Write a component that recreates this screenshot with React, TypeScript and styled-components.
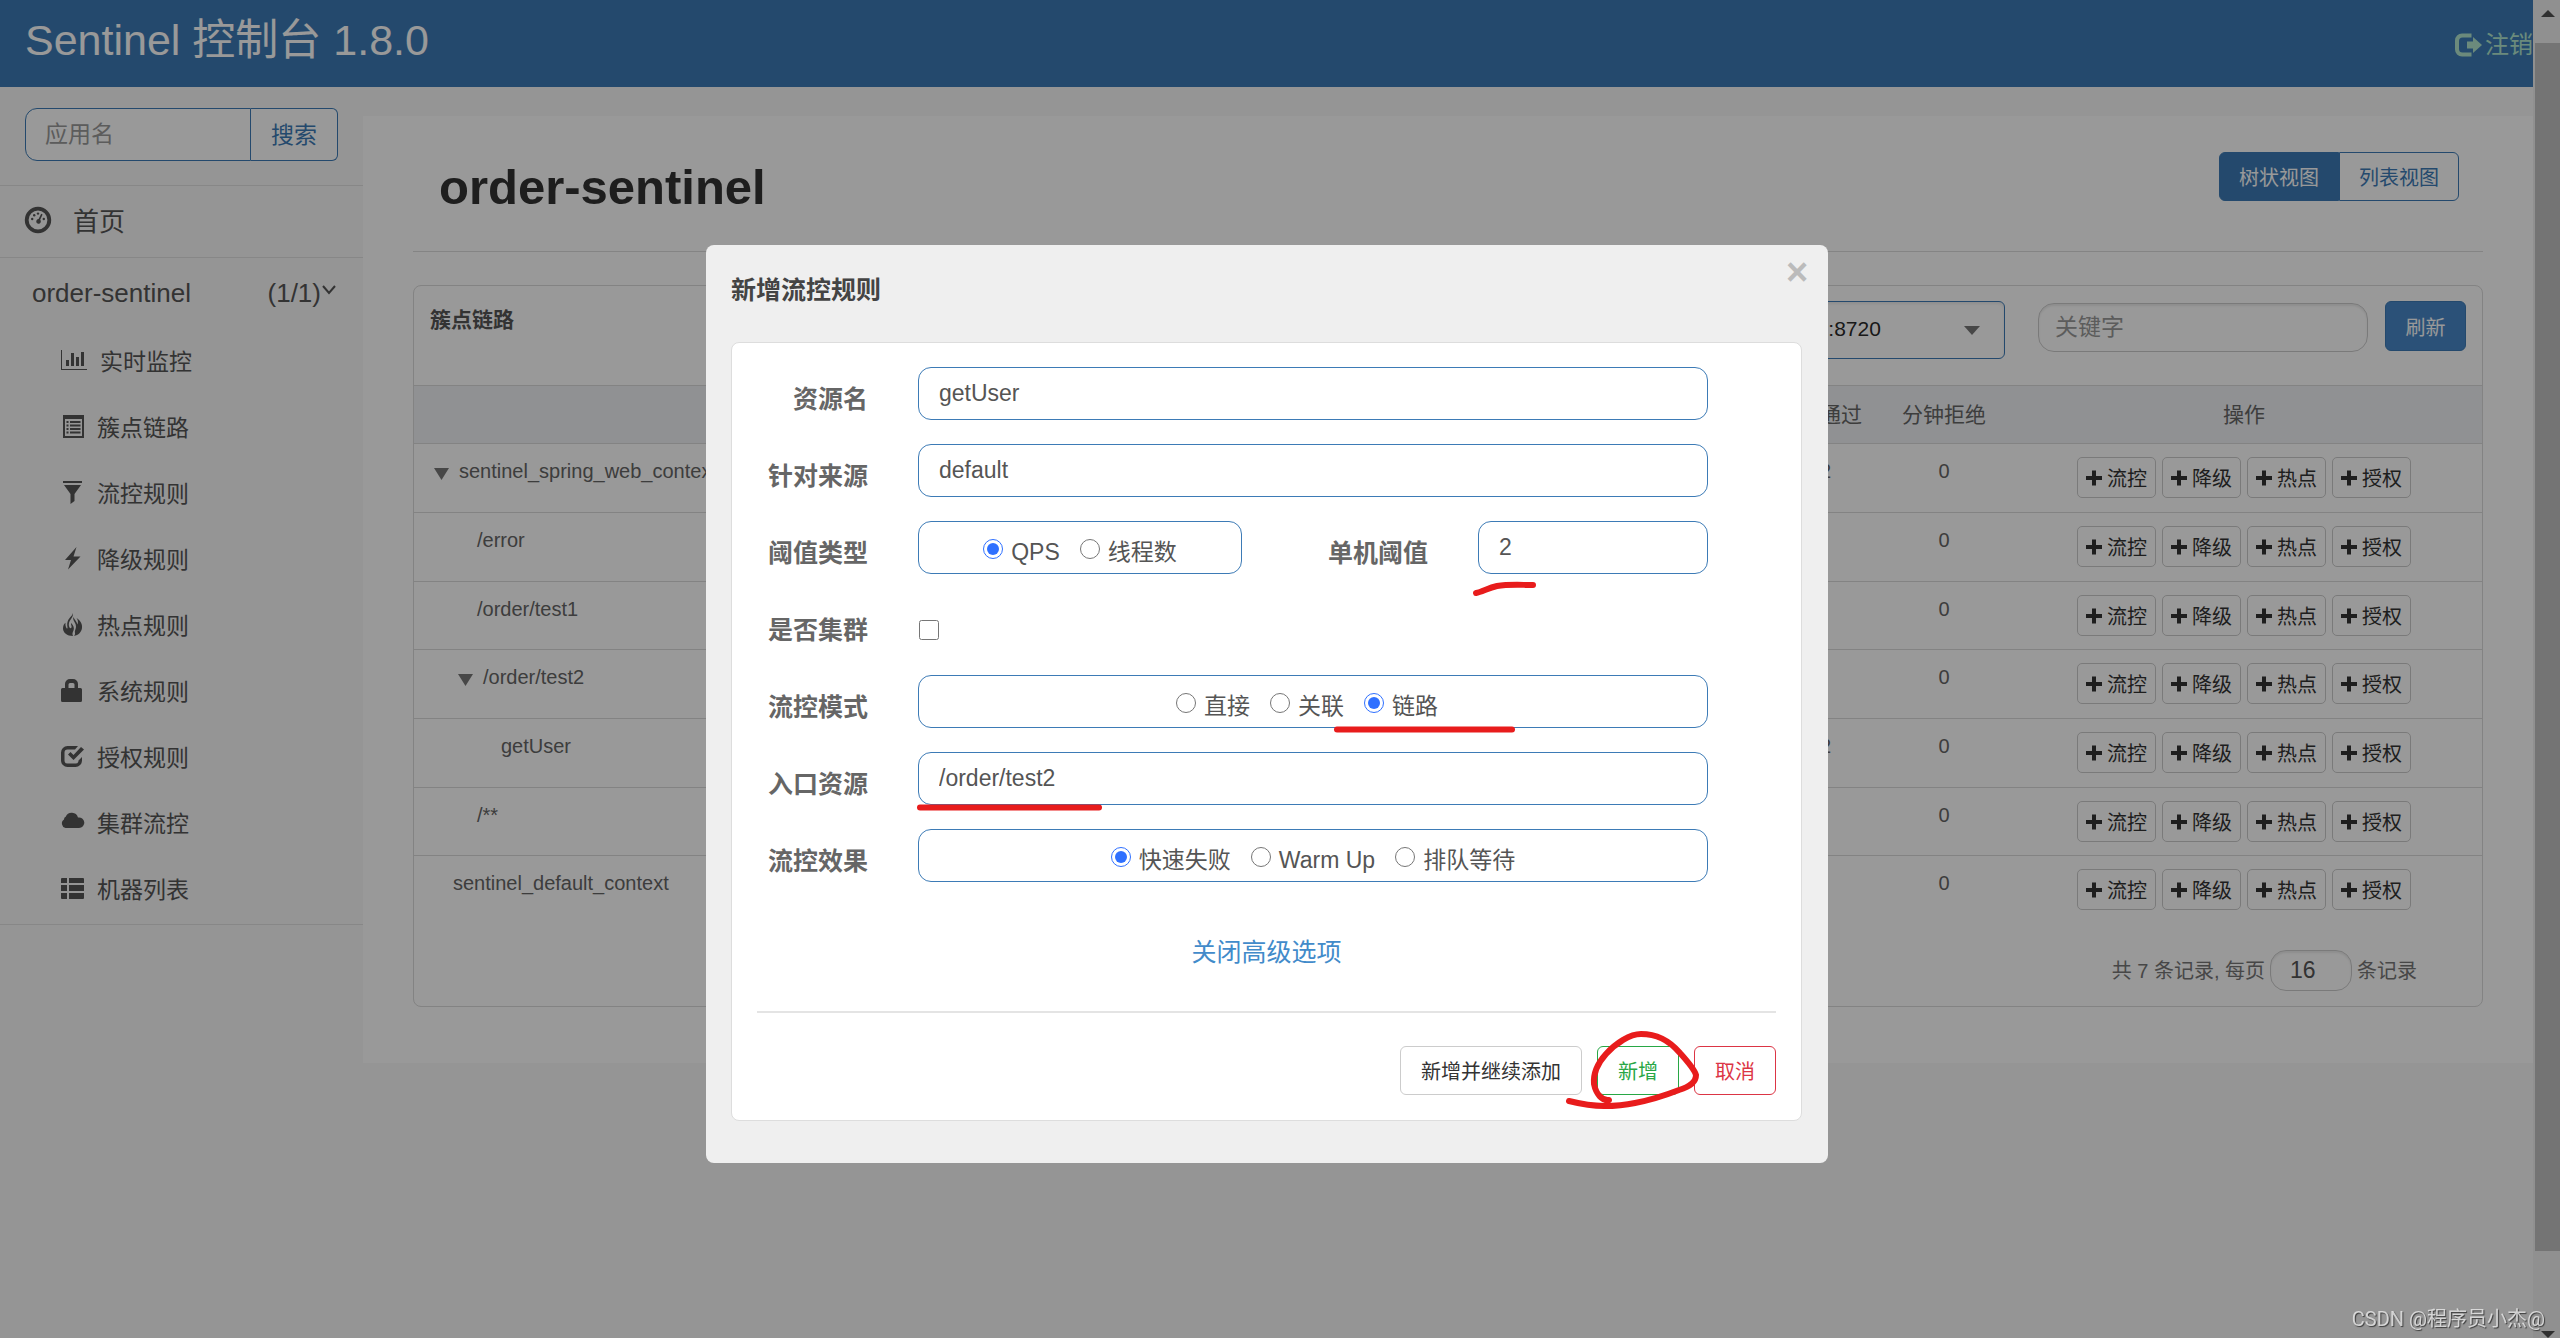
import React from "react";
import styled, { createGlobalStyle, css } from "styled-components";

const GlobalStyle = createGlobalStyle`
  *, *::before, *::after { box-sizing: border-box; }
  html, body { margin: 0; padding: 0; }
  body, button, input, select {
    font-family: "Liberation Sans", "Noto Sans CJK SC", sans-serif;
  }
  body { background: #f8f8f8; color: #555; overflow: hidden; }
  h1, h2, ul { margin: 0; padding: 0; }
  ul { list-style: none; }
  a { color: inherit; text-decoration: none; }
`;

const BLUE = "#3d7bb6";

/* ---------- frame ---------- */

const Frame = styled.div`
  display: flex;
  height: 100vh;
  overflow: hidden;
`;

const Page = styled.div`
  flex: 1;
  min-width: 0;
  display: flex;
  flex-direction: column;
`;

const Body = styled.div`
  flex: 1;
  display: flex;
  align-items: flex-start;
`;

const ScrollTrack = styled.div`
  width: 27px;
  display: flex;
  flex-direction: column;
  padding-left: 2px;
  background: #f1f1f1;
`;

const ScrollCap = styled.div<{ $size: number; $end?: boolean }>`
  height: ${(p) => p.$size}px;
  display: flex;
  justify-content: center;
  align-items: ${(p) => (p.$end ? "flex-end" : "flex-start")};
  padding-top: ${(p) => (p.$end ? 0 : 10)}px;
`;

const ScrollThumb = styled.div`
  flex: 1;
  background: #c1c1c1;
`;

/* ---------- top bar ---------- */

const TopBar = styled.header`
  height: 87px;
  flex: none;
  display: flex;
  justify-content: space-between;
  padding-left: 25px;
  background: ${BLUE};
`;

const Brand = styled.a`
  color: #fff;
  font-size: 43px;
  line-height: 80px;
  white-space: nowrap;
`;

const Logout = styled.a`
  display: flex;
  align-items: center;
  gap: 3px;
  padding-top: 2px;
  color: #b2e7cf;
  font-size: 24px;
  line-height: 30px;
  white-space: nowrap;
`;

/* ---------- sidebar ---------- */

const Sidebar = styled.nav`
  width: 363px;
  flex: none;
  padding-bottom: 2px;
  border-bottom: 1px solid #e2e2e2;
`;

const SearchGroup = styled.form`
  display: flex;
  padding: 21px 25px 24px;
  border-bottom: 1px solid #e2e2e2;
`;

const SearchInput = styled.input`
  flex: 1;
  min-width: 0;
  height: 53px;
  padding: 0 19px;
  border: 1px solid ${BLUE};
  border-radius: 12px 0 0 12px;
  background: #fff;
  font-size: 23px;
  &::placeholder { color: #999; }
`;

const SearchButton = styled.button`
  width: 87px;
  height: 53px;
  padding: 0 0 3px;
  border: 1px solid ${BLUE};
  border-left: 0;
  border-radius: 0 6px 6px 0;
  background: #fff;
  color: ${BLUE};
  font-size: 23px;
`;

const HomeLink = styled.a`
  display: flex;
  align-items: center;
  gap: 21px;
  height: 72px;
  padding: 0 0 4px 24px;
  border-bottom: 1px solid #e2e2e2;
  color: #555;
  font-size: 26px;
`;

const AppLink = styled.a`
  display: flex;
  align-items: center;
  height: 70px;
  padding: 0 26px 0 32px;
  color: #555;
  font-size: 26px;
`;

const AppName = styled.span`
  flex: 1;
`;

const MenuLink = styled.a<{ $wide?: boolean }>`
  display: flex;
  align-items: center;
  height: 66px;
  padding: 0 0 2px 61px;
  gap: ${(p) => (p.$wide ? 12 : 9)}px;
  color: #555;
  font-size: 23px;
`;

/* ---------- main ---------- */

const Main = styled.main`
  flex: 1;
  min-width: 0;
  margin-top: 29px;
  padding: 0 50px 56px;
  background: #fff;
`;

const TitleRow = styled.div`
  display: flex;
  justify-content: space-between;
  align-items: flex-start;
  height: 136px;
  padding: 36px 24px 0 26px;
  border-bottom: 1px solid #dcdcdc;
`;

const Title = styled.h1`
  padding-top: 8px;
  color: #333;
  font-size: 49px;
  line-height: 54px;
`;

const ViewSwitch = styled.div`
  display: flex;
`;

const ViewButton = styled.button<{ $active?: boolean }>`
  width: 120px;
  height: 49px;
  padding: 0;
  border: 1px solid ${BLUE};
  border-radius: ${(p) => (p.$active ? "6px 0 0 6px" : "0 6px 6px 0")};
  background: ${(p) => (p.$active ? BLUE : "#fff")};
  color: ${(p) => (p.$active ? "#fff" : BLUE)};
  font-size: 20px;
`;

const Card = styled.section`
  margin-top: 33px;
  border: 1px solid #dadada;
  border-radius: 8px;
`;

const CardHead = styled.div`
  display: flex;
  align-items: flex-start;
  height: 99px;
  padding: 15px 16px 0;
`;

const CardTitle = styled.h2`
  flex: 1;
  padding-top: 4px;
  font-size: 21px;
  line-height: 30px;
`;

const MachineSelect = styled.span`
  display: flex;
  align-items: center;
  width: 326px;
  height: 58px;
  padding-right: 24px;
  border: 1px solid ${BLUE};
  border-radius: 6px;
  box-shadow: inset 0 2px 3px rgba(0, 0, 0, 0.08);
  select {
    flex: 1;
    height: 100%;
    padding: 0 14px 3px;
    border: 0;
    background: transparent;
    color: #2b2b2b;
    font-size: 21px;
    appearance: none;
  }
`;

const KeywordInput = styled.input`
  width: 330px;
  height: 49px;
  margin: 2px 17px 0 33px;
  padding: 0 16px;
  border: 1px solid #ccc;
  border-radius: 16px;
  box-shadow: inset 0 2px 2px rgba(0, 0, 0, 0.08);
  font-size: 23px;
  &::placeholder { color: #999; }
`;

const RefreshButton = styled.button`
  width: 81px;
  height: 50px;
  padding: 0;
  border: 1px solid ${BLUE};
  border-radius: 6px;
  background: #4887c8;
  color: #fff;
  font-size: 20px;
`;

const Table = styled.table`
  width: 100%;
  border-collapse: separate;
  border-spacing: 0;
  table-layout: fixed;
  color: #666;
`;

const HeadCell = styled.th`
  height: 58px;
  padding: 0 0 4px;
  border-top: 1px solid #dadada;
  background: #f0f2f5;
  font-size: 21px;
  font-weight: 400;
`;

const Cell = styled.td<{ $center?: boolean }>`
  height: 68px;
  padding: 13px 0 0;
  border-top: 1px solid #dadada;
  font-size: 20px;
  line-height: 28px;
  vertical-align: top;
  text-align: ${(p) => (p.$center ? "center" : "left")};
`;

const Row = styled.tr`
  height: 69px;
  &:nth-child(3n) {
    height: 68px;
  }
`;

const TreeName = styled.span<{ $level: number; $open?: boolean }>`
  display: flex;
  align-items: center;
  gap: 10px;
  padding-left: ${(p) => (p.$open ? 20 : 39) + p.$level * 24}px;
  svg {
    margin-top: 5px;
  }
`;

const Actions = styled.div`
  display: flex;
  justify-content: center;
  gap: 6px;
`;

const ActionButton = styled.button`
  display: flex;
  align-items: center;
  justify-content: center;
  gap: 5px;
  width: 79px;
  height: 41px;
  padding: 0;
  border: 1px solid #ccc;
  border-radius: 5px;
  background: #fff;
  color: #333;
  font-size: 20px;
`;

const Pager = styled.div`
  display: flex;
  justify-content: flex-end;
  align-items: center;
  gap: 5px;
  padding: 26px 65px 15px 0;
  color: #777;
  font-size: 20px;
  line-height: 30px;
`;

const PageSize = styled.input`
  width: 82px;
  height: 41px;
  padding: 0 19px;
  border: 1px solid #ccc;
  border-radius: 16px;
  box-shadow: inset 0 2px 2px rgba(0, 0, 0, 0.08);
  color: #555;
  font-size: 23px;
`;

/* ---------- dialog ---------- */

const Overlay = styled.div`
  position: fixed;
  inset: 0;
  display: flex;
  justify-content: center;
  align-items: flex-start;
  padding: 245px 26px 0 0;
  background: rgba(0, 0, 0, 0.4);
`;

const Dialog = styled.div`
  position: relative;
  width: 1122px;
  padding: 0 26px 42px 25px;
  border-radius: 8px;
  background: #efefef;
`;

const DialogHead = styled.div`
  display: flex;
  justify-content: space-between;
  align-items: flex-start;
  height: 97px;
`;

const DialogTitle = styled.h2`
  padding-top: 25px;
  color: #444;
  font-size: 25px;
  line-height: 40px;
`;

const CloseButton = styled.button`
  width: 30px;
  height: 30px;
  margin: 12px -10px 0 0;
  padding: 0;
  border: 0;
  background: none;
  color: #bbb;
  font-size: 38px;
  font-weight: 700;
  line-height: 30px;
`;

const Panel = styled.form`
  padding: 24px 25px 25px;
  border: 1px solid #ddd;
  border-radius: 8px;
  background: #fff;
`;

const Fields = styled.div`
  display: flex;
  flex-direction: column;
  gap: 24px;
  padding-right: 68px;
`;

const FieldRow = styled.div`
  display: flex;
  height: 53px;
  border: 0;
`;

const labelText = css`
  margin-right: 50px;
  padding-top: 12px;
  color: #666;
  font-size: 25px;
  font-weight: 700;
  line-height: 40px;
  text-align: right;
`;

const Label = styled.label`
  width: 111px;
  ${labelText}
`;

const SideLabel = styled.label`
  flex: 1;
  ${labelText}
`;

const box = css`
  height: 53px;
  border: 1px solid ${BLUE};
  border-radius: 13px;
  background: #fff;
  color: #555;
  font-size: 23px;
`;

const TextField = styled.input<{ $short?: boolean }>`
  ${box}
  flex: ${(p) => (p.$short ? "none" : "1")};
  width: ${(p) => (p.$short ? "230px" : "auto")};
  min-width: 0;
  padding: 0 20px;
`;

const RadioBox = styled.div<{ $short?: boolean; $trail?: boolean }>`
  ${box}
  flex: ${(p) => (p.$short ? "none" : "1")};
  width: ${(p) => (p.$short ? "324px" : "auto")};
  display: flex;
  justify-content: center;
  gap: 20px;
  padding-right: ${(p) => (p.$trail ? 12 : 0)}px;
`;

const RadioOption = styled.label`
  display: flex;
  align-items: flex-start;
  gap: 8px;
  padding-top: 15px;
  line-height: 30px;
  input {
    width: 20px;
    height: 20px;
    margin: 2px 0 0;
    accent-color: #2f70ff;
  }
`;

const Check = styled.input`
  width: 20px;
  height: 20px;
  margin: 22px 0 0 1px;
`;

const AdvancedLink = styled.a`
  display: block;
  width: max-content;
  margin: 48px auto 37px;
  color: #428bca;
  font-size: 25px;
  line-height: 44px;
`;

const Buttons = styled.div`
  display: flex;
  justify-content: flex-end;
  gap: 15px;
  padding-top: 33px;
  border-top: 2px solid #e4e4e4;
`;

const FormButton = styled.button<{ $line: string; $ink: string }>`
  height: 49px;
  padding: 0 20px;
  border: 1px solid ${(p) => p.$line};
  border-radius: 6px;
  background: #fff;
  color: ${(p) => p.$ink};
  font-size: 20px;
`;

const PenMarks = styled.svg`
  position: absolute;
  inset: 0;
  width: 100%;
  height: 100%;
  pointer-events: none;
`;

const Watermark = styled.div`
  position: fixed;
  right: 15px;
  bottom: 4px;
  color: rgba(230, 230, 230, 0.85);
  font-family: Roboto, "Noto Sans CJK SC", sans-serif;
  font-size: 20px;
  line-height: 30px;
  text-shadow: 1px 1px 1px rgba(0, 0, 0, 0.6);
`;

/* ---------- icons ---------- */

const Triangle = ({ w, h, up, color }: { w: number; h: number; up?: boolean; color: string }) => (
  <svg width={w} height={h} viewBox="0 0 10 10" preserveAspectRatio="none" fill={color} aria-hidden="true">
    <path d={up ? "M5 0 10 10H0z" : "M0 0H10L5 10z"} />
  </svg>
);

const PlusIcon = () => (
  <svg width="16" height="16" viewBox="0 0 16 16" fill="currentColor" aria-hidden="true">
    <path d="M6 0.5h4v5.500h6v4h-6v5.500H6V10H0V6h6z" />
  </svg>
);

const LogoutIcon = () => (
  <svg width="28" height="24" viewBox="0 0 28 24" fill="currentColor" aria-hidden="true">
    <path d="M17.500 0.500H8a7 7 0 0 0-7 7v9a7 7 0 0 0 7 7h9.500v-4H8.500a3.500 3.500 0 0 1-3.500-3.500V8a3.500 3.500 0 0 1 3.500-3.500h9z" />
    <path d="M13 8.500h6V4l9 8-9 8v-4.500h-6z" />
  </svg>
);

const DashboardIcon = () => (
  <svg width="28" height="28" viewBox="0 0 28 28" fill="currentColor" aria-hidden="true">
    <circle cx="14" cy="14" r="11.300" fill="none" stroke="currentColor" strokeWidth="3.800" />
    <circle cx="8.200" cy="13" r="1.200" />
    <circle cx="10.200" cy="9.300" r="1.200" />
    <circle cx="14" cy="7.600" r="1.200" />
    <circle cx="19.800" cy="13" r="1.200" />
    <path d="M17.200 7.800l1.400.7-2.400 5.300a2.300 2.300 0 1 1-1.600-.7z" />
  </svg>
);

const ICONS: Record<string, React.ReactNode> = {
  chart: (
    <path d="M0 1h1v19h25v1H0zM5 11h3v6H5zM10 4h3v13h-3zM15 8h3v9h-3zM20 3h3v14h-3z" />
  ),
  list: (
    <path
      fillRule="evenodd"
      d="M2 0h21v23H2zM4 4v17h17V4zM5.500 6h2v2h-2zM9 6h10.500v2H9zM5.500 9.500h2v2h-2zM9 9.500h10.500v2H9zM5.500 13h2v2h-2zM9 13h10.500v2H9zM5.500 16.500h2v2h-2zM9 16.500h10.500v2H9z"
    />
  ),
  filter: <path d="M2 0h19v2H2zM3 4h17l-6.500 9v7L9.500 23V13z" />,
  flash: <path d="M15.500 0 4 13h6L7 22.500 19.500 9.500H12.500z" />,
  fire: (
    <>
      <path d="M12 0C12.500 3 10.500 5 9 7.500C7.500 10 7.500 12.500 8.500 14.500C9.500 16 11 15 10.500 13C10.200 11.800 9.800 11 10.200 10C12.500 12.500 13.500 15 12.500 17.500C11.500 19.500 11 21 12 23C6 23 2 19.500 2 15.500C2 13 3 11 4.500 9.800C4.300 12 4.600 14 5.600 15.200C6.200 15.800 6.700 15.300 6.500 14.500C6 12 6 9.500 7.200 7C8.500 4.300 11.500 3 12 0z" />
      <path d="M15.500 5C19.500 7.500 21.500 11 21 15C20.500 19 17.500 22.200 13 23C14.300 21.500 14.200 20.200 13.800 19C14 17 15 15.500 15 13.500C15 12 14.500 10.500 13.500 9C12.500 7.500 12 6 12.300 4C13.500 6.500 15.500 8 16.500 11.500C17.300 9 17 7 15.500 5z" />
    </>
  ),
  lock: (
    <path
      fillRule="evenodd"
      d="M4 9V5a5 5 0 0 1 5-5h3a5 5 0 0 1 5 5v4h2.500A1.500 1.500 0 0 1 21 10.500v11A1.500 1.500 0 0 1 19.500 23h-18A1.500 1.500 0 0 1 0 21.500v-11A1.500 1.500 0 0 1 1.500 9zM7.500 9h6V5.500a1.500 1.500 0 0 0-1.500-1.500H9a1.500 1.500 0 0 0-1.500 1.500z"
    />
  ),
  check: (
    <>
      <path d="M17 1H6.500A6.500 6.500 0 0 0 0 7.500v8A6.500 6.500 0 0 0 6.500 22h8a6.500 6.500 0 0 0 6.500-6.500V12l-3.500 3.500a3 3 0 0 1-3 3h-8a3 3 0 0 1-3-3v-8a3 3 0 0 1 3-3H14z" />
      <path d="M7 9.500l2.500-2.500 3 3L20 2l3 2.500L12.500 15z" />
    </>
  ),
  cloud: (
    <path d="M4.500 17A4.700 4.700 0 0 1 3 8.500a2.800 2.800 0 0 1 1.700-2.700A6.500 6.500 0 0 1 17 6.500a5.300 5.300 0 1 1 1 10.500z" />
  ),
  table: (
    <path d="M1 1h5v5H0V2a1 1 0 0 1 1-1zM8 1h14a1 1 0 0 1 1 1v4H8zM0 8h6v6H0zM8 8h15v6H8zM0 16h6v6H1a1 1 0 0 1-1-1zM8 16h15v5a1 1 0 0 1-1 1H8z" />
  ),
};

const MenuIcon = ({ name }: { name: string }) => (
  <svg width="27" height="23" viewBox="0 0 27 23" fill="currentColor" aria-hidden="true">
    {ICONS[name]}
  </svg>
);

/* ---------- data ---------- */

const MENU = [
  ["chart", "实时监控"],
  ["list", "簇点链路"],
  ["filter", "流控规则"],
  ["flash", "降级规则"],
  ["fire", "热点规则"],
  ["lock", "系统规则"],
  ["check", "授权规则"],
  ["cloud", "集群流控"],
  ["table", "机器列表"],
];

const ROWS = [
  { name: "sentinel_spring_web_context", level: 0, open: true, pass: 12 },
  { name: "/error", level: 1, open: false, pass: 0 },
  { name: "/order/test1", level: 1, open: false, pass: 0 },
  { name: "/order/test2", level: 1, open: true, pass: 0 },
  { name: "getUser", level: 2, open: false, pass: 12 },
  { name: "/**", level: 1, open: false, pass: 0 },
  { name: "sentinel_default_context", level: 0, open: false, pass: 0 },
];

const ACTIONS = ["流控", "降级", "热点", "授权"];

const Radio = ({ group, text, checked }: { group: string; text: string; checked?: boolean }) => (
  <RadioOption>
    <input type="radio" name={group} defaultChecked={checked} />
    <span>{text}</span>
  </RadioOption>
);

export default function App() {
  return (
    <>
      <GlobalStyle />
      <Frame>
        <Page>
          <TopBar>
            <Brand href="#">Sentinel 控制台 1.8.0</Brand>
            <Logout href="#logout">
              <LogoutIcon />
              注销
            </Logout>
          </TopBar>
          <Body>
            <Sidebar>
              <SearchGroup>
                <SearchInput placeholder="应用名" aria-label="应用名" />
                <SearchButton type="button">搜索</SearchButton>
              </SearchGroup>
              <HomeLink href="#home">
                <DashboardIcon />
                首页
              </HomeLink>
              <AppLink href="#app">
                <AppName>order-sentinel</AppName>
                (1/1)
                <svg width="16" height="20" viewBox="0 0 16 20" fill="none" stroke="currentColor" strokeWidth="2" aria-hidden="true">
                  <path d="M2 3l6 7 6-7" />
                </svg>
              </AppLink>
              <ul>
                {MENU.map(([icon, text], i) => (
                  <li key={text}>
                    <MenuLink href="#menu" $wide={i === 0}>
                      <MenuIcon name={icon} />
                      {text}
                    </MenuLink>
                  </li>
                ))}
              </ul>
            </Sidebar>
            <Main>
              <TitleRow>
                <Title>order-sentinel</Title>
                <ViewSwitch>
                  <ViewButton $active>树状视图</ViewButton>
                  <ViewButton>列表视图</ViewButton>
                </ViewSwitch>
              </TitleRow>
              <Card>
                <CardHead>
                  <CardTitle>簇点链路</CardTitle>
                  <MachineSelect>
                    <select aria-label="机器">
                      <option>192.168.0.103:8720</option>
                    </select>
                    <Triangle w={16} h={9} color="#777" />
                  </MachineSelect>
                  <KeywordInput placeholder="关键字" aria-label="关键字" />
                  <RefreshButton>刷新</RefreshButton>
                </CardHead>
                <Table>
                  <colgroup>
                    <col />
                    <col width="124" />
                    <col width="124" />
                    <col width="476" />
                  </colgroup>
                  <thead>
                    <tr>
                      <HeadCell scope="col" aria-label="资源名" />
                      <HeadCell scope="col">分钟通过</HeadCell>
                      <HeadCell scope="col">分钟拒绝</HeadCell>
                      <HeadCell scope="col">操作</HeadCell>
                    </tr>
                  </thead>
                  <tbody>
                    {ROWS.map((row) => (
                      <Row key={row.name}>
                        <Cell>
                          <TreeName $level={row.level} $open={row.open}>
                            {row.open && <Triangle w={15} h={12} color="#777" />}
                            {row.name}
                          </TreeName>
                        </Cell>
                        <Cell $center>{row.pass}</Cell>
                        <Cell $center>0</Cell>
                        <Cell $center>
                          <Actions>
                            {ACTIONS.map((text) => (
                              <ActionButton key={text}>
                                <PlusIcon />
                                {text}
                              </ActionButton>
                            ))}
                          </Actions>
                        </Cell>
                      </Row>
                    ))}
                  </tbody>
                </Table>
                <Pager>
                  <label htmlFor="page-size">共 7 条记录, 每页</label>
                  <PageSize id="page-size" defaultValue="16" />
                  <span>条记录</span>
                </Pager>
              </Card>
            </Main>
          </Body>
        </Page>
        <ScrollTrack aria-hidden="true">
          <ScrollCap $size={43}>
            <Triangle w={14} h={7} up color="#505050" />
          </ScrollCap>
          <ScrollThumb />
          <ScrollCap $size={87} $end>
            <Triangle w={14} h={7} color="#505050" />
          </ScrollCap>
        </ScrollTrack>
      </Frame>

      <Overlay>
        <Dialog role="dialog" aria-labelledby="dialog-title">
          <DialogHead>
            <DialogTitle id="dialog-title">新增流控规则</DialogTitle>
            <CloseButton aria-label="关闭">×</CloseButton>
          </DialogHead>
          <Panel>
            <Fields>
              <FieldRow>
                <Label htmlFor="resource">资源名</Label>
                <TextField id="resource" defaultValue="getUser" />
              </FieldRow>
              <FieldRow>
                <Label htmlFor="origin">针对来源</Label>
                <TextField id="origin" defaultValue="default" />
              </FieldRow>
              <FieldRow>
                <Label as="span">阈值类型</Label>
                <RadioBox $short role="radiogroup" aria-label="阈值类型">
                  <Radio group="grade" text="QPS" checked />
                  <Radio group="grade" text="线程数" />
                </RadioBox>
                <SideLabel htmlFor="threshold">单机阈值</SideLabel>
                <TextField id="threshold" $short defaultValue="2" />
              </FieldRow>
              <FieldRow>
                <Label htmlFor="cluster">是否集群</Label>
                <Check id="cluster" type="checkbox" />
              </FieldRow>
              <FieldRow>
                <Label as="span">流控模式</Label>
                <RadioBox $trail role="radiogroup" aria-label="流控模式">
                  <Radio group="mode" text="直接" />
                  <Radio group="mode" text="关联" />
                  <Radio group="mode" text="链路" checked />
                </RadioBox>
              </FieldRow>
              <FieldRow>
                <Label htmlFor="entry">入口资源</Label>
                <TextField id="entry" defaultValue="/order/test2" />
              </FieldRow>
              <FieldRow>
                <Label as="span">流控效果</Label>
                <RadioBox role="radiogroup" aria-label="流控效果">
                  <Radio group="effect" text="快速失败" checked />
                  <Radio group="effect" text="Warm Up" />
                  <Radio group="effect" text="排队等待" />
                </RadioBox>
              </FieldRow>
            </Fields>
            <AdvancedLink href="#advanced">关闭高级选项</AdvancedLink>
            <Buttons>
              <FormButton type="button" $line="#ccc" $ink="#333">新增并继续添加</FormButton>
              <FormButton type="button" $line="#28a745" $ink="#28a745">新增</FormButton>
              <FormButton type="button" $line="#dc3545" $ink="#dc3545">取消</FormButton>
            </Buttons>
          </Panel>
          <PenMarks viewBox="0 0 1122 918" fill="none" stroke="#e81c1c" strokeWidth="6" strokeLinecap="round" strokeLinejoin="round" aria-hidden="true">
            <path d="M770 348C776 347 782 343 791 341C803 339 815 340 827 340" />
            <path d="M631 484.500H806" />
            <path d="M214 562.500H393" />
            <path d="M903 855C896 856 890 849 888 839C887 828 891 819 900 809C910 798 924 789 935 789C950 789 962 794 974 808C983 818 989 826 990 830C990 837 983 842 973 845C955 852 945 855 929 858C915 861 905 861 898 861C885 861 875 859 863 856" />
          </PenMarks>
        </Dialog>
      </Overlay>
      <Watermark>CSDN @程序员小杰@</Watermark>
    </>
  );
}
